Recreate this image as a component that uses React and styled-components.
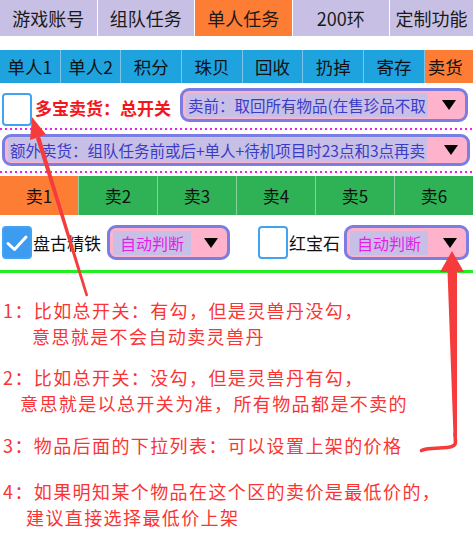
import styled, { createGlobalStyle } from "styled-components";

const GlobalStyle = createGlobalStyle`
  html, body {
    margin: 0;
    padding: 0;
    background: #ffffff;
  }
  body {
    font-family: "Noto Sans CJK SC", "Noto Sans", sans-serif;
  }
`;

const topTabs = ["游戏账号", "组队任务", "单人任务", "200环", "定制功能"];
const subTabs = ["单人1", "单人2", "积分", "珠贝", "回收", "扔掉", "寄存", "卖货"];
const sellTabs = ["卖1", "卖2", "卖3", "卖4", "卖5", "卖6"];

const notes = [
  { lines: ["1：比如总开关：有勾，但是灵兽丹没勾，", "意思就是不会自动卖灵兽丹"], indent: 29, gap: 24 },
  { lines: ["2：比如总开关：没勾，但是灵兽丹有勾，", "意思就是以总开关为准，所有物品都是不卖的"], indent: 17, gap: 15 },
  { lines: ["3：物品后面的下拉列表：可以设置上架的价格"], indent: 0, gap: 16 },
  { lines: ["4：如果明知某个物品在这个区的卖价是最低价的，", "建议直接选择最低价上架"], indent: 23, gap: 20 },
];

export default function App() {
  return (
    <>
      <GlobalStyle />
      <Page>
        <TopBar>
          {topTabs.map((t, i) => (
            <TopTab key={t} $active={i === 2} $last={i === topTabs.length - 1}>
              {t}
            </TopTab>
          ))}
        </TopBar>

        <SubBar>
          {subTabs.map((t, i) => (
            <SubTab key={t} $active={i === 7}>
              {t}
            </SubTab>
          ))}
        </SubBar>

        <MasterRow>
          <CheckBox />
          <MasterLabel>多宝卖货：总开关</MasterLabel>
          <Select $width={288} $height={34} $right={5}>
            <SelectText>卖前：取回所有物品(在售珍品不取</SelectText>
            <Caret />
          </Select>
        </MasterRow>
        <Dots />
        <ExtraRow>
          <Select $height={32} $flex>
            <SelectText>额外卖货：组队任务前或后+单人+待机项目时23点和3点再卖</SelectText>
            <Caret />
          </Select>
        </ExtraRow>
        <Dots />

        <SellBar>
          {sellTabs.map((t, i) => (
            <SellTab key={t} $active={i === 0}>
              {t}
            </SellTab>
          ))}
        </SellBar>

        <ItemRow>
          <CheckBox $checked>
            <svg width="24" height="20" viewBox="0 0 24 20">
              <path d="M3 10.5 L9.5 16.5 L21 4" fill="none" stroke="#fff" strokeWidth="3" strokeLinecap="round" strokeLinejoin="round" />
            </svg>
          </CheckBox>
          <ItemName>盘古精铁</ItemName>
          <Select $width={123} $height={35} $left={6}>
            <SelectText $pink>自动判断</SelectText>
            <Caret />
          </Select>
          <CheckBox $left={28} />
          <ItemName>红宝石</ItemName>
          <Select $width={125} $height={35} $left={4}>
            <SelectText $pink>自动判断</SelectText>
            <Caret />
          </Select>
        </ItemRow>
        <GreenLine />

        <Notes>
          {notes.map((n) => (
            <Note key={n.lines[0]} $gap={n.gap}>
              {n.lines.map((l, j) => (
                <NoteLine key={l} $indent={j > 0 ? n.indent : 0}>
                  {l}
                </NoteLine>
              ))}
            </Note>
          ))}
        </Notes>

        <Overlay width="473" height="535" viewBox="0 0 473 535">
          <g fill="#f53b3b">
            <polygon points="32,117 30,140 46,134.5" />
            <polygon points="35.8,137.8 40.1,136.4 88.2,295.6 85.8,296.4" />
            <polygon points="452,251 440,272 464,272" />
            <polygon points="447.5,271 457,271 457,436 453.5,436" />
          </g>
          <path
            d="M455 434 L455.5 442 Q455.5 447 447 447.5 L432 448.5 Q424 449 421.5 450.5"
            fill="none"
            stroke="#f53b3b"
            strokeWidth="3.6"
            strokeLinecap="round"
          />
        </Overlay>
      </Page>
    </>
  );
}

const Page = styled.div`
  position: relative;
  width: 473px;
  height: 535px;
  overflow: hidden;
  background: #ffffff;
`;

const TopBar = styled.div`
  display: flex;
  gap: 1px;
  height: 36px;
  background: #ffffff;
`;

const TopTab = styled.div`
  flex: ${(p) => (p.$last ? "1 1 auto" : "0 0 96.5px")};
  display: flex;
  align-items: center;
  justify-content: center;
  background: ${(p) => (p.$active ? "#fd7d35" : "#c8c0e4")};
  color: #1a1a1a;
  font-size: 18px;
`;

const SubBar = styled.div`
  display: flex;
  gap: 1px;
  height: 33px;
  margin-top: 14px;
  background: #7cc4ea;
`;

const SubTab = styled.div`
  flex: ${(p) => (p.$active ? "1 0 auto" : "0 0 59.7px")};
  display: flex;
  align-items: center;
  justify-content: ${(p) => (p.$active ? "flex-start" : "center")};
  padding-left: ${(p) => (p.$active ? "3px" : "0")};
  background: ${(p) => (p.$active ? "#fd7d35" : "#1ea3de")};
  color: #111;
  font-size: 17.5px;
  white-space: nowrap;
  overflow: hidden;
`;

const MasterRow = styled.div`
  display: flex;
  align-items: flex-start;
  height: 44px;
  padding-left: 2px;
`;

const CheckBox = styled.div`
  flex: 0 0 auto;
  box-sizing: border-box;
  width: 30px;
  height: 33px;
  margin-top: ${(p) => (p.$checked || p.$left ? "0" : "10px")};
  margin-left: ${(p) => p.$left || 0}px;
  border-radius: 4px;
  border: 2px solid #42a3f2;
  background: ${(p) => (p.$checked ? "#3d9cef" : "#ffffff")};
  display: flex;
  align-items: center;
  justify-content: center;
`;

const MasterLabel = styled.div`
  margin-top: 13px;
  margin-left: 3px;
  color: #f5161c;
  font-size: 17px;
  font-weight: bold;
  line-height: 24px;
`;

const Select = styled.div`
  box-sizing: border-box;
  flex: ${(p) => (p.$flex ? "1 1 auto" : "0 0 auto")};
  width: ${(p) => (p.$width ? `${p.$width}px` : "auto")};
  height: ${(p) => p.$height}px;
  margin-left: ${(p) => (p.$left !== undefined ? `${p.$left}px` : "auto")};
  margin-right: ${(p) => p.$right || 0}px;
  margin-top: ${(p) => (p.$right ? "5px" : "0")};
  border: 3px solid #7a7ee2;
  border-radius: 9px;
  background: #ffb2cc;
  display: flex;
  align-items: center;
  padding: 0 9px 0 3px;
`;

const SelectText = styled.div`
  flex: 0 1 auto;
  background: #c7bfe6;
  color: ${(p) => (p.$pink ? "#e61ee6" : "#3b3bc6")};
  font-size: ${(p) => (p.$pink ? "16px" : "15.5px")};
  line-height: 24px;
  padding: 0 ${(p) => (p.$pink ? "7px" : "2px")};
  white-space: nowrap;
  overflow: hidden;
`;

const Caret = styled.span`
  margin-left: auto;
  width: 0;
  height: 0;
  border-left: 7px solid transparent;
  border-right: 7px solid transparent;
  border-top: 10px solid #000;
`;

const Dots = styled.div`
  height: 2px;
  margin-top: 1px;
  background-image: repeating-linear-gradient(
    to right,
    #f01ef0 0 2px,
    transparent 2px 5px
  );
`;

const ExtraRow = styled.div`
  display: flex;
  padding: 4px 3px 4px 2px;
  height: 40px;
  box-sizing: border-box;
`;

const SellBar = styled.div`
  display: flex;
  gap: 1px;
  height: 39px;
  margin-top: 3px;
  background: #86d29c;
`;

const SellTab = styled.div`
  flex: 1 1 0;
  display: flex;
  align-items: center;
  justify-content: center;
  background: ${(p) => (p.$active ? "#fd7d35" : "#2fb156")};
  color: #111;
  font-size: 17px;
`;

const ItemRow = styled.div`
  display: flex;
  align-items: center;
  height: 55px;
  padding-left: 2px;
`;

const ItemName = styled.div`
  margin-left: 1px;
  color: #111;
  font-size: 17px;
  white-space: nowrap;
`;

const GreenLine = styled.div`
  height: 3px;
  background: #22ee22;
`;

const Notes = styled.div`
  padding-left: 3px;
  color: #fa3434;
  font-size: 18px;
  letter-spacing: 1.4px;
  line-height: 26px;
`;

const Note = styled.div`
  margin-top: ${(p) => p.$gap}px;
`;

const NoteLine = styled.div`
  padding-left: ${(p) => p.$indent}px;
  white-space: nowrap;
`;

const Overlay = styled.svg`
  position: absolute;
  top: 0;
  left: 0;
  pointer-events: none;
`;
